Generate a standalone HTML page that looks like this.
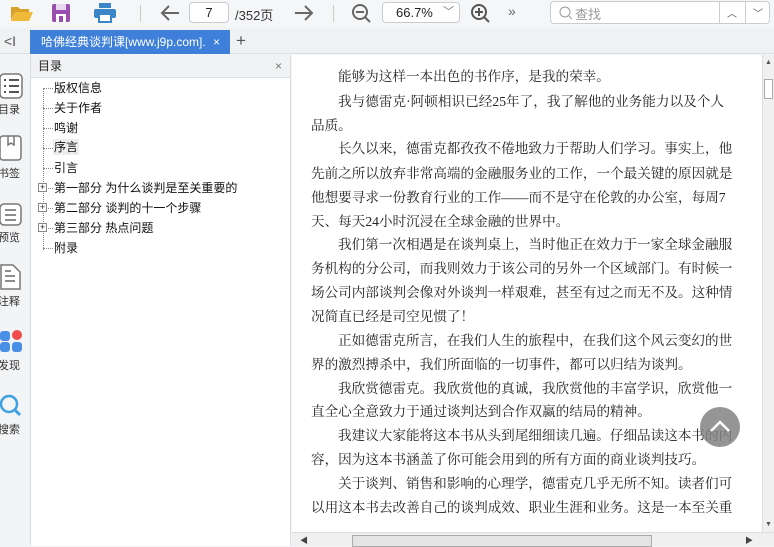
<!DOCTYPE html>
<html><head><meta charset="utf-8"><style>
*{margin:0;padding:0;box-sizing:border-box}
body{width:774px;height:546px;overflow:hidden;background:#f3f4f6;font-family:"Liberation Sans","Noto Sans CJK SC",sans-serif;position:relative;font-size:12px;color:#222}
.a{position:absolute}
.toolbar{left:0;top:0;width:774px;height:27px;background:#f5f6f8}
.box{border:1px solid #c8ccd2;border-radius:4px;background:#fff}
.tabbar{left:0;top:28px;width:774px;height:26px;background:#f0f1f3;border-bottom:1px solid #dcdfe3}
.tab{left:30px;top:30px;width:200px;height:24px;background:#3d7fd9;color:#fff;font-size:12px;line-height:24px;padding-left:11px}
.side{left:0;top:55px;width:30px;height:491px;background:#f3f4f6}
.sl{position:absolute;left:-4px;width:26px;text-align:center;font-size:11px;color:#333}
.toc{left:30px;top:55px;width:261px;height:491px;background:#fff;border-left:1px solid #d8dbe0;border-right:1px solid #d8dbe0}
.toch{height:23px;background:#f1f2f4;border-bottom:1px solid #dcdfe3;font-size:12px;line-height:23px;padding-left:7px}
.it{position:absolute;left:23px;font-size:12px;color:#111;line-height:16px}
.content{left:292px;top:55px;width:470px;height:477px;background:#fff}
.ln{position:absolute;left:19px;width:413px;font-family:"Liberation Serif","Noto Serif CJK SC",serif;font-size:13.6px;color:#222;text-align:justify;text-align-last:justify;white-space:nowrap;line-height:18px}
.in{left:46px;width:386px}
.nj{text-align-last:left}
</style></head><body>
<div class="a toolbar">
 <svg class="a" style="left:10px;top:4px" width="24" height="18"><path d="M1 3h7l2 2h9v3H5L1 16z" fill="#d9a12a"/><path d="M5 8h18l-4 9H1z" fill="#f0b93a"/></svg>
 <svg class="a" style="left:52px;top:4px" width="18" height="18"><rect x="0" y="0" width="18" height="18" rx="2" fill="#9a4fb0"/><rect x="4" y="0" width="10" height="6" fill="#e9d7ef"/><rect x="4" y="10" width="10" height="8" fill="#fff"/><rect x="7" y="12" width="4" height="6" fill="#9a4fb0"/></svg>
 <svg class="a" style="left:94px;top:3px" width="22" height="20"><rect x="5" y="0" width="12" height="5" fill="#3a86c8"/><rect x="0" y="6" width="22" height="9" rx="2" fill="#3a86c8"/><rect x="5" y="11" width="12" height="8" fill="#fff" stroke="#3a86c8" stroke-width="2"/></svg>
 <div class="a" style="left:140px;top:5px;width:1px;height:17px;background:#ccc"></div>
 <svg class="a" style="left:160px;top:5px" width="20" height="16"><path d="M19 8H2M9 1L2 8l7 7" stroke="#666" stroke-width="2" fill="none"/></svg>
 <div class="a box" style="left:189px;top:2px;width:40px;height:21px;text-align:center;line-height:19px;font-size:13px">7</div>
 <div class="a" style="left:235px;top:5px;font-size:13px;color:#333">/352页</div>
 <svg class="a" style="left:294px;top:5px" width="20" height="16"><path d="M1 8h17M11 1l7 7-7 7" stroke="#666" stroke-width="2" fill="none"/></svg>
 <div class="a" style="left:333px;top:5px;width:1px;height:17px;background:#ccc"></div>
 <svg class="a" style="left:351px;top:3px" width="20" height="20"><circle cx="9" cy="9" r="7" stroke="#666" stroke-width="2" fill="none"/><path d="M5 9h8M14 14l5 5" stroke="#666" stroke-width="2"/></svg>
 <div class="a box" style="left:382px;top:2px;width:78px;height:21px;font-size:13px;line-height:19px;padding-left:13px">66.7%<span style="position:absolute;left:60px;top:0;color:#777;font-size:11px">﹀</span></div>
 <svg class="a" style="left:470px;top:3px" width="20" height="20"><circle cx="9" cy="9" r="7" stroke="#555" stroke-width="2" fill="none"/><path d="M5 9h8M9 5v8M14 14l5 5" stroke="#555" stroke-width="2"/></svg>
 <div class="a" style="left:508px;top:3px;font-size:14px;color:#666">»</div>
 <div class="a box" style="left:550px;top:1px;width:220px;height:23px">
  <svg class="a" style="left:8px;top:4px" width="14" height="14"><circle cx="6" cy="6" r="5" stroke="#999" fill="none"/><path d="M10 10l3 3" stroke="#999"/></svg>
  <div class="a" style="left:24px;top:2px;font-size:13px;color:#999">查找</div>
  <div class="a" style="left:168px;top:0;width:1px;height:21px;background:#ccc"></div>
  <div class="a" style="left:194px;top:0;width:1px;height:21px;background:#ccc"></div>
  <div class="a" style="left:176px;top:3px;font-size:10px;color:#555">︿</div>
  <div class="a" style="left:202px;top:3px;font-size:10px;color:#555">﹀</div>
 </div>
</div>
<div class="a tabbar"></div>
<div class="a" style="left:4px;top:33px;font-size:14px;color:#555">&lt;I</div>
<div class="a tab">哈佛经典谈判课[www.j9p.com].<span style="position:absolute;left:183px">×</span></div>
<div class="a" style="left:236px;top:31px;font-size:17px;color:#555">+</div>
<div class="a side">
 <svg class="a" style="left:-1px;top:18px" width="25" height="26"><rect x="1" y="1" width="22" height="24" rx="4" fill="#fff" stroke="#777" stroke-width="1.5"/><path d="M5 7h2M10 7h10M5 13h2M10 13h10M5 19h2M10 19h10" stroke="#555" stroke-width="2"/></svg>
 <div class="sl" style="top:46px">目录</div>
 <svg class="a" style="left:-1px;top:80px" width="24" height="26"><rect x="1" y="1" width="21" height="24" rx="3" fill="#fff" stroke="#777" stroke-width="1.5"/><path d="M9 1v9l3-2 3 2V1" stroke="#777" stroke-width="1.5" fill="none"/></svg>
 <div class="sl" style="top:110px">书签</div>
 <svg class="a" style="left:-1px;top:146px" width="24" height="26"><rect x="1" y="3" width="21" height="21" rx="4" fill="#fff" stroke="#777" stroke-width="1.5"/><path d="M6 9h11M6 14h11M6 19h11" stroke="#666" stroke-width="1.5"/></svg>
 <div class="sl" style="top:174px">预览</div>
 <svg class="a" style="left:-1px;top:208px" width="24" height="28"><path d="M2 2h12l7 7v17H2z" fill="#fff" stroke="#777" stroke-width="1.5"/><path d="M6 13h10M6 18h10M6 8h6" stroke="#666" stroke-width="1.5"/></svg>
 <div class="sl" style="top:238px">注释</div>
 <svg class="a" style="left:0;top:274px" width="24" height="24"><rect x="0" y="2" width="10" height="10" rx="3" fill="#4a8fe6"/><circle cx="17" cy="6" r="5" fill="#f04a4a"/><rect x="0" y="13" width="10" height="10" rx="3" fill="#4a8fe6"/><rect x="12" y="13" width="10" height="10" rx="3" fill="#4a8fe6"/></svg>
 <div class="sl" style="top:302px">发现</div>
 <svg class="a" style="left:-1px;top:339px" width="24" height="24"><circle cx="10" cy="10" r="8" stroke="#3da0e0" stroke-width="2.5" fill="none"/><path d="M16 16l5 5" stroke="#3da0e0" stroke-width="3"/></svg>
 <div class="sl" style="top:366px">搜索</div>
</div>
<div class="a toc">
 <div class="toch">目录<span style="position:absolute;right:8px;top:0;color:#777">×</span></div>
 <div class="a" style="left:12px;top:33px;height:162px;border-left:1px dotted #888"></div>
 <div class="a" style="left:12px;top:33px;width:10px;border-top:1px dotted #888"></div>
 <div class="a" style="left:12px;top:53px;width:10px;border-top:1px dotted #888"></div>
 <div class="a" style="left:12px;top:73px;width:10px;border-top:1px dotted #888"></div>
 <div class="a" style="left:12px;top:93px;width:10px;border-top:1px dotted #888"></div>
 <div class="a" style="left:12px;top:113px;width:10px;border-top:1px dotted #888"></div>
 <div class="a" style="left:12px;top:133px;width:10px;border-top:1px dotted #888"></div>
 <div class="a" style="left:12px;top:153px;width:10px;border-top:1px dotted #888"></div>
 <div class="a" style="left:12px;top:173px;width:10px;border-top:1px dotted #888"></div>
 <div class="a" style="left:12px;top:193px;width:10px;border-top:1px dotted #888"></div>
 <div class="it" style="top:25px">版权信息</div>
 <div class="it" style="top:45px">关于作者</div>
 <div class="it" style="top:65px">鸣谢</div>
 <div class="it" style="top:84px;background:#eee;padding:0 1px;left:22px">序言</div>
 <div class="it" style="top:105px">引言</div>
 <div class="it" style="top:125px">第一部分 为什么谈判是至关重要的</div>
 <div class="it" style="top:145px">第二部分 谈判的十一个步骤</div>
 <div class="it" style="top:165px">第三部分 热点问题</div>
 <div class="it" style="top:185px">附录</div>
 <div class="a" style="left:7px;top:128px;width:9px;height:9px;border:1px solid #888;background:#fff;font-size:9px;line-height:7px;text-align:center">+</div>
 <div class="a" style="left:7px;top:148px;width:9px;height:9px;border:1px solid #888;background:#fff;font-size:9px;line-height:7px;text-align:center">+</div>
 <div class="a" style="left:7px;top:168px;width:9px;height:9px;border:1px solid #888;background:#fff;font-size:9px;line-height:7px;text-align:center">+</div>
</div>
<div class="a content">
 <div class="ln in nj" style="top:13px">能够为这样一本出色的书作序，是我的荣幸。</div>
 <div class="ln in" style="top:38px">我与德雷克·阿顿相识已经25年了，我了解他的业务能力以及个人</div>
 <div class="ln nj" style="top:62px">品质。</div>
 <div class="ln in" style="top:85px">长久以来，德雷克都孜孜不倦地致力于帮助人们学习。事实上，他</div>
 <div class="ln" style="top:110px">先前之所以放弃非常高端的金融服务业的工作，一个最关键的原因就是</div>
 <div class="ln" style="top:134px">他想要寻求一份教育行业的工作——而不是守在伦敦的办公室，每周7</div>
 <div class="ln nj" style="top:158px">天、每天24小时沉浸在全球金融的世界中。</div>
 <div class="ln in" style="top:181px">我们第一次相遇是在谈判桌上，当时他正在效力于一家全球金融服</div>
 <div class="ln" style="top:205px">务机构的分公司，而我则效力于该公司的另外一个区域部门。有时候一</div>
 <div class="ln" style="top:229px">场公司内部谈判会像对外谈判一样艰难，甚至有过之而无不及。这种情</div>
 <div class="ln nj" style="top:253px">况简直已经是司空见惯了！</div>
 <div class="ln in" style="top:277px">正如德雷克所言，在我们人生的旅程中，在我们这个风云变幻的世</div>
 <div class="ln nj" style="top:301px">界的激烈搏杀中，我们所面临的一切事件，都可以归结为谈判。</div>
 <div class="ln in" style="top:325px">我欣赏德雷克。我欣赏他的真诚，我欣赏他的丰富学识，欣赏他一</div>
 <div class="ln nj" style="top:348px">直全心全意致力于通过谈判达到合作双赢的结局的精神。</div>
 <div class="ln in" style="top:372px">我建议大家能将这本书从头到尾细细读几遍。仔细品读这本书的内</div>
 <div class="ln nj" style="top:396px">容，因为这本书涵盖了你可能会用到的所有方面的商业谈判技巧。</div>
 <div class="ln in" style="top:420px">关于谈判、销售和影响的心理学，德雷克几乎无所不知。读者们可</div>
 <div class="ln" style="top:444px">以用这本书去改善自己的谈判成效、职业生涯和业务。这是一本至关重</div>
 <div class="a" style="left:408px;top:352px;width:40px;height:40px;border-radius:50%;background:rgba(130,130,130,0.85)"><svg width="40" height="40"><path d="M11 24l9-9 9 9" stroke="#fff" stroke-width="2.5" fill="none"/></svg></div>
</div>
<div class="a" style="left:762px;top:55px;width:12px;height:477px;background:#f0f0f0;border-left:1px solid #ddd">
 <div class="a" style="left:2px;top:4px;font-size:7px;color:#555">▲</div>
 <div class="a" style="left:1px;top:24px;width:9px;height:20px;background:#fff;border:1px solid #aaa"></div>
 <div class="a" style="left:2px;top:466px;font-size:7px;color:#555">▼</div>
</div>
<div class="a" style="left:292px;top:532px;width:482px;height:14px;background:#f0f0f0;border-top:1px solid #ddd">
 <div class="a" style="left:8px;top:2px;font-size:8px;color:#444">◀</div>
 <div class="a" style="left:60px;top:2px;width:300px;height:12px;background:#e4e4e4;border:1px solid #aaa"></div>
 <div class="a" style="left:453px;top:2px;font-size:8px;color:#444">▶</div>
</div>
</body></html>
